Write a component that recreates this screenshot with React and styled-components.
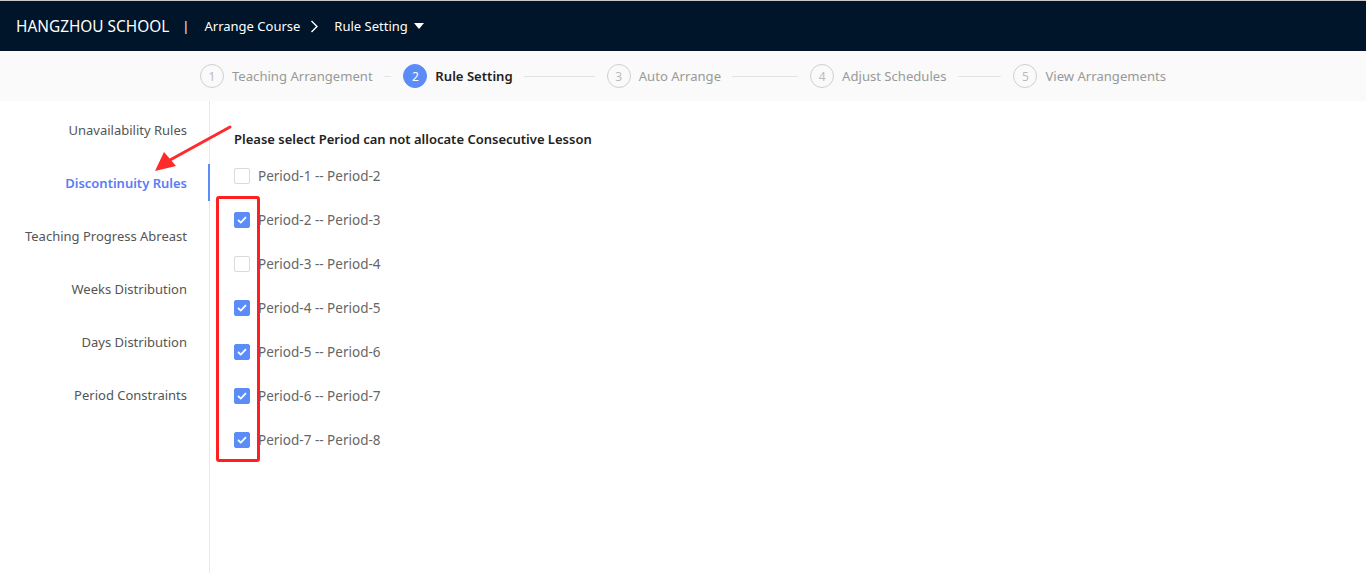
import React, { useState } from "react";
import styled, { createGlobalStyle } from "styled-components";

const GlobalStyle = createGlobalStyle`
  html, body {
    margin: 0;
    padding: 0;
    background: #fff;
    font-family: "Noto Sans", "Open Sans", sans-serif;
  }
  * { box-sizing: border-box; }
`;

const Page = styled.div`
  height: 573px;
  display: flex;
  flex-direction: column;
  position: relative;
  overflow: hidden;
`;

const TopBar = styled.header`
  height: 51px;
  flex: none;
  background: #001529;
  border-top: 1px solid #c8c8c8;
  display: flex;
  align-items: center;
  padding: 0 16px;
  color: #fff;
  font-size: 13px;
`;

const School = styled.span`
  font-size: 15.4px;
`;

const Divider = styled.span`
  margin: 0 15px 0 13px;
`;

const Crumb = styled.span`
  display: inline-flex;
  align-items: center;
`;

const Chevron = styled.span`
  margin: 0 15px 0 10px;
  display: inline-flex;
`;

const Caret = styled.span`
  margin-left: 6px;
  width: 0;
  height: 0;
  border-left: 5px solid transparent;
  border-right: 5px solid transparent;
  border-top: 6px solid #fff;
`;

const StepsBar = styled.div`
  height: 50px;
  flex: none;
  background: #fafafa;
  display: flex;
  justify-content: center;
  align-items: center;
`;

const Steps = styled.div`
  width: 966px;
  display: flex;
  align-items: center;
`;

const Step = styled.div`
  display: flex;
  align-items: center;
  flex: ${(p) => (p.last ? "none" : "1")};
`;

const Circle = styled.span`
  width: 24px;
  height: 24px;
  border-radius: 50%;
  flex: none;
  display: flex;
  align-items: center;
  justify-content: center;
  font-size: 12px;
  border: 1px solid ${(p) => (p.active ? "#5b8cf7" : "#cfcfcf")};
  background: ${(p) => (p.active ? "#5b8cf7" : "transparent")};
  color: ${(p) => (p.active ? "#fff" : "#bbb")};
`;

const StepLabel = styled.span`
  margin-left: 8px;
  font-size: 13.1px;
  white-space: nowrap;
  color: ${(p) => (p.active ? "#222" : "#999")};
  font-weight: ${(p) => (p.active ? 600 : 400)};
`;

const StepLine = styled.span`
  flex: 1;
  height: 1px;
  background: #e3e3e3;
  margin: 0 12px 0 11px;
`;

const Body = styled.div`
  flex: 1;
  display: flex;
`;

const Side = styled.nav`
  width: 210px;
  flex: none;
  border-right: 1px solid #e8e8e8;
  padding-top: 10px;
  display: flex;
  flex-direction: column;
`;

const MenuItem = styled.div`
  height: 37px;
  margin-bottom: 16px;
  display: flex;
  align-items: center;
  justify-content: flex-end;
  padding-right: 21px;
  font-size: 13px;
  margin-right: -1px;
  color: ${(p) => (p.active ? "#5b7cf5" : "#555")};
  font-weight: ${(p) => (p.active ? 600 : 400)};
  border-right: 2px solid ${(p) => (p.active ? "#5b8cf7" : "transparent")};
`;

const Content = styled.main`
  flex: 1;
  padding: 29px 0 0 24px;
`;

const Title = styled.div`
  font-size: 13px;
  font-weight: 600;
  color: #222;
  margin-bottom: 20px;
`;

const Row = styled.label`
  height: 44px;
  display: flex;
  align-items: center;
  font-size: 13.5px;
  color: #666;
  cursor: pointer;
  margin-top: -14px;
  margin-bottom: 14px;
`;

const Box = styled.span`
  width: 16px;
  height: 16px;
  border-radius: 2px;
  flex: none;
  margin-right: 8px;
  display: flex;
  align-items: center;
  justify-content: center;
  border: 1px solid ${(p) => (p.checked ? "#5b8cf7" : "#d9d9d9")};
  background: ${(p) => (p.checked ? "#5b8cf7" : "#fff")};
`;

const RedFrame = styled.div`
  position: absolute;
  left: 216px;
  top: 196px;
  width: 44px;
  height: 266px;
  border: 3px solid #ff1f1f;
  border-radius: 3px;
  pointer-events: none;
`;

const Arrow = styled.svg`
  position: absolute;
  left: 150px;
  top: 122px;
  pointer-events: none;
`;

const steps = [
  "Teaching Arrangement",
  "Rule Setting",
  "Auto Arrange",
  "Adjust Schedules",
  "View Arrangements",
];

const menu = [
  "Unavailability Rules",
  "Discontinuity Rules",
  "Teaching Progress Abreast",
  "Weeks Distribution",
  "Days Distribution",
  "Period Constraints",
];

export default function App() {
  const [checked, setChecked] = useState([false, true, false, true, true, true, true]);
  const toggle = (i) => setChecked((c) => c.map((v, j) => (j === i ? !v : v)));

  return (
    <Page>
      <GlobalStyle />
      <TopBar>
        <School>HANGZHOU SCHOOL</School>
        <Divider>|</Divider>
        <Crumb>Arrange Course</Crumb>
        <Chevron>
          <svg width="9" height="13" viewBox="0 0 9 13">
            <path d="M1.5 1 L7 6.5 L1.5 12" fill="none" stroke="#fff" strokeWidth="1.4" />
          </svg>
        </Chevron>
        <Crumb>
          Rule Setting
          <Caret />
        </Crumb>
      </TopBar>
      <StepsBar>
        <Steps>
          {steps.map((s, i) => {
            const last = i === steps.length - 1;
            return (
              <Step key={s} last={last}>
                <Circle active={i === 1}>{i + 1}</Circle>
                <StepLabel active={i === 1}>{s}</StepLabel>
                {!last && <StepLine />}
              </Step>
            );
          })}
        </Steps>
      </StepsBar>
      <Body>
        <Side>
          {menu.map((m, i) => (
            <MenuItem key={m} active={i === 1}>
              {m}
            </MenuItem>
          ))}
        </Side>
        <Content>
          <Title>Please select Period can not allocate Consecutive Lesson</Title>
          {checked.map((c, i) => (
            <Row key={i} onClick={() => toggle(i)}>
              <Box checked={c}>
                {c && (
                  <svg width="10" height="8" viewBox="0 0 10 8">
                    <path d="M1 4 L3.8 6.6 L9 1.2" fill="none" stroke="#fff" strokeWidth="1.8" />
                  </svg>
                )}
              </Box>
              Period-{i + 1} -- Period-{i + 2}
            </Row>
          ))}
        </Content>
      </Body>
      <RedFrame />
      <Arrow width="90" height="56" viewBox="0 0 90 56">
        <path d="M80 5 L20 38" stroke="#ff2a2a" strokeWidth="3" strokeLinecap="round" />
        <path d="M5 49 L14 30 L26 44 Z" fill="#ff2a2a" />
      </Arrow>
    </Page>
  );
}
